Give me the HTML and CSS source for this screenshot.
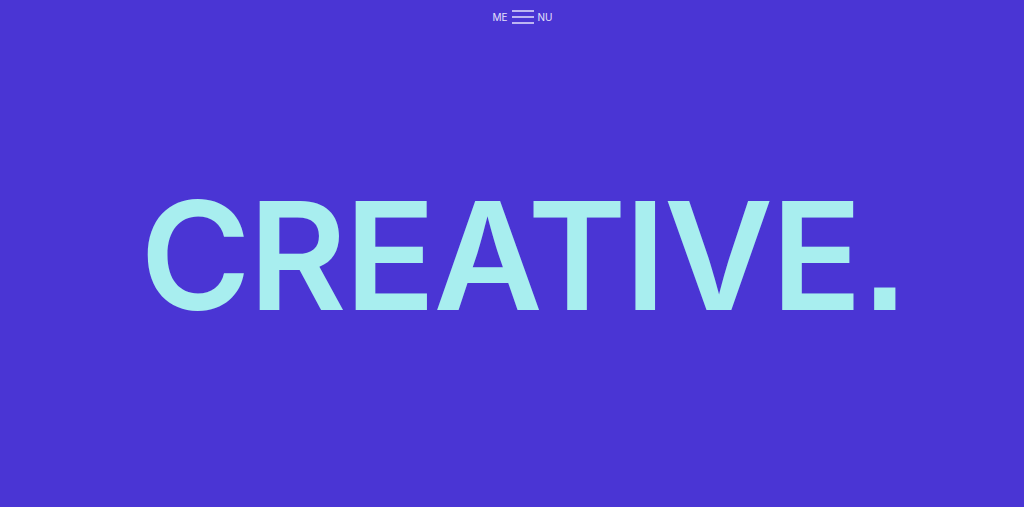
FILE: index.html
```html
<!DOCTYPE html>
<html>
<head>
<meta charset="utf-8">
<link rel="stylesheet" href="styles.css">
</head>
<body>
<header class="top">
  <button class="menu">
    <span class="menu-text">ME</span>
    <svg class="burger" width="22" height="14" viewBox="0 0 22 14"><path d="M0 1H22M0 7H22M0 13H22" stroke="#e4e0fb" stroke-width="1.4"/></svg>
    <span class="menu-text">NU</span>
  </button>
</header>
<main class="hero">
  <h1 class="title">CREATIVE<span class="dot">.</span></h1>
</main>
</body>
</html>
```
FILE: styles.css
```css
html, body { margin: 0; padding: 0; }
body {
  width: 1024px;
  height: 507px;
  background: #4a35d4;
  overflow: hidden;
  display: flex;
  flex-direction: column;
  font-family: Inter, "Liberation Sans", sans-serif;
}
.top {
  display: flex;
  justify-content: center;
  padding-top: 10px;
  height: 14px;
}
.menu {
  display: flex;
  align-items: center;
  gap: 4px;
  background: none;
  border: 0;
  padding: 0;
  margin-left: 21px;
  color: #e4e0fb;
  font-family: Inter, "Liberation Sans", sans-serif;
  font-size: 10px;
  line-height: 14px;
}
.hero {
  flex: 1;
  display: flex;
  justify-content: center;
}
.title {
  margin: 157px 0 0 0;
  padding-left: 20px;
  font-size: 150px;
  font-weight: 600;
  line-height: 1;
  color: #a8eeef;
  letter-spacing: -2px;
}
.dot {
  font-family: "Liberation Sans", Arial, sans-serif;
  font-weight: 700;
  padding-left: 4px;
}
```
